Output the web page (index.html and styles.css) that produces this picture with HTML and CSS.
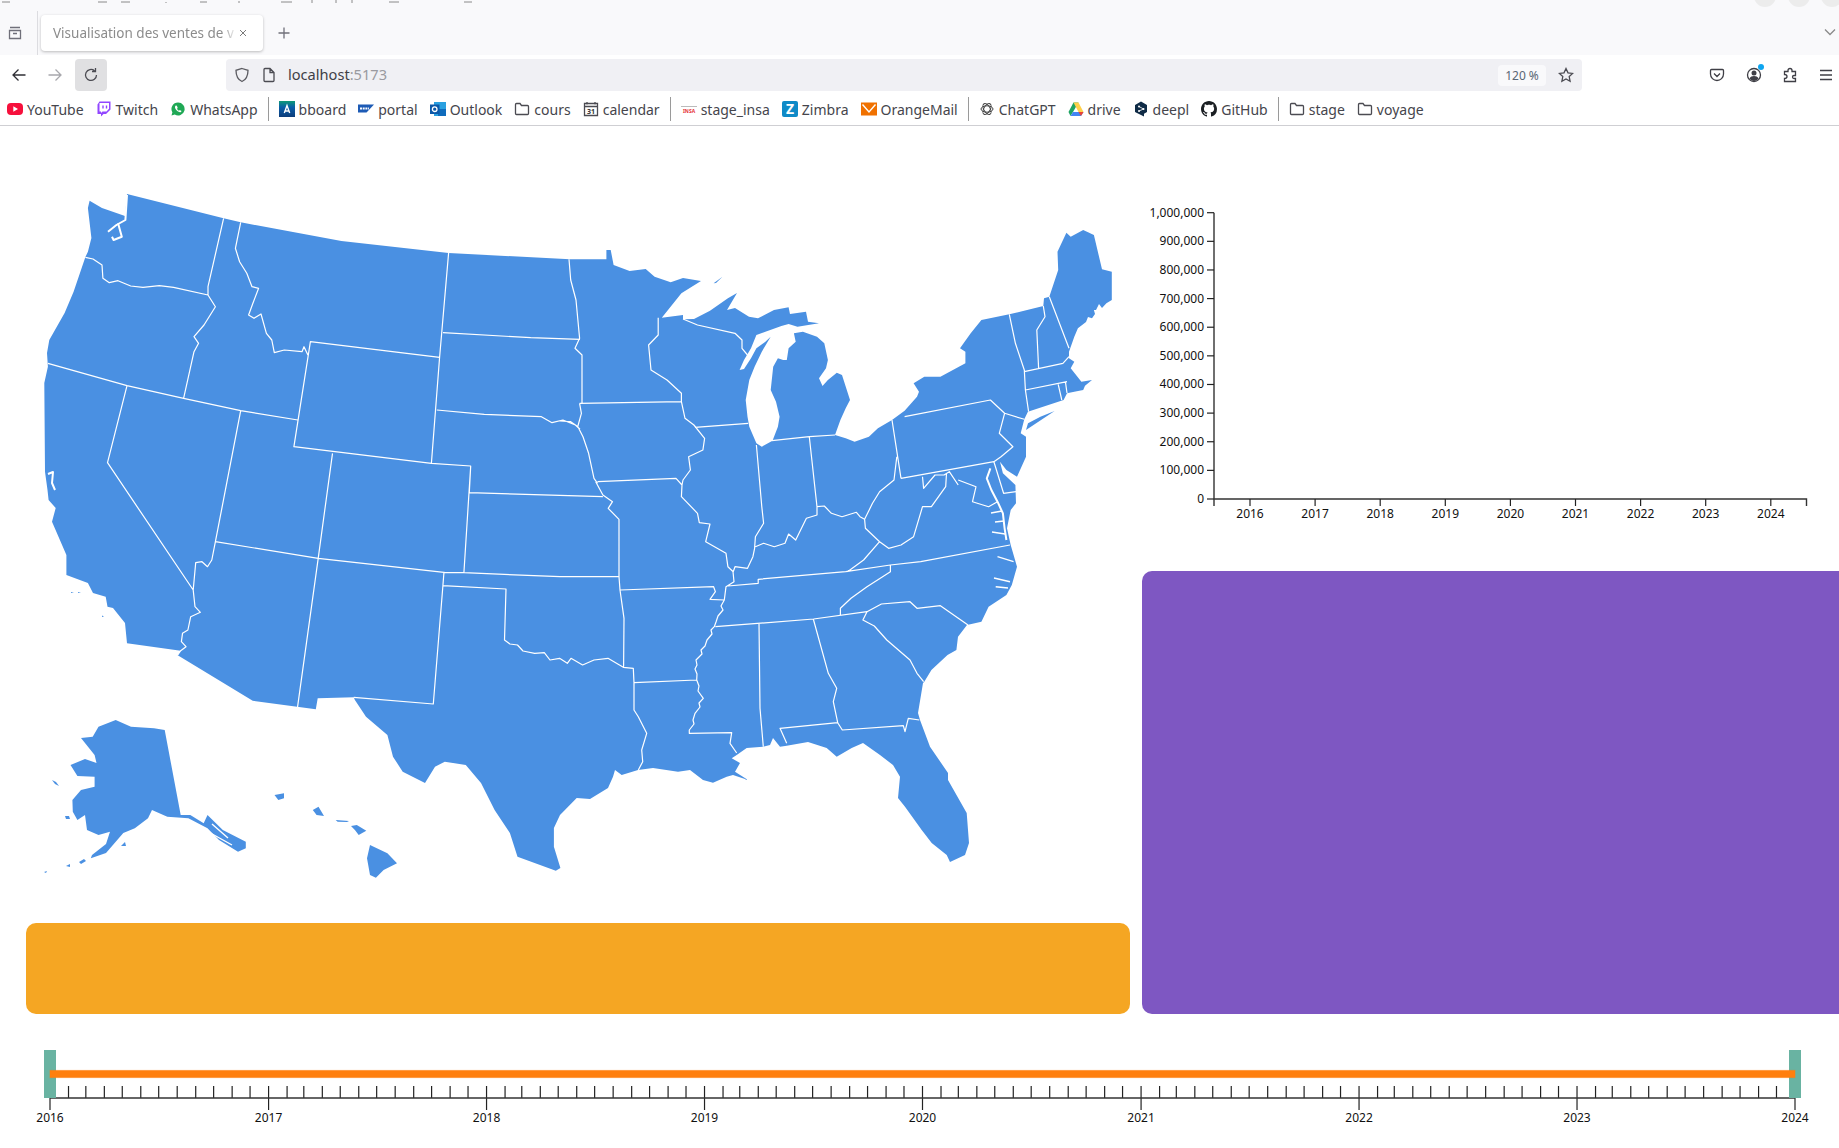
FILE: index.html
```html
<!DOCTYPE html>
<html>
<head>
  <meta charset="utf-8">
  <meta name="viewport" content="width=device-width, initial-scale=1">
  <title>Visualisation des ventes de voitures</title>
  <link rel="stylesheet" href="styles.css">
</head>
<body>

  <!-- Fenetre du navigateur -->
  <header class="browser">
    <svg class="title-strip" viewBox="0 0 1839 8">
      <path class="title-marks" d="M2 2H10M98 2H107M121 2H130M166 2V3M200 2H207M239 1V3M281 2H292M312 0V3M336 0V3M352 0V3M389 2H399M464 2H472"/>
      <circle class="win-btn" cx="1765" cy="-4" r="11"/>
      <circle class="win-btn" cx="1799" cy="-4" r="11"/>
      <circle class="win-btn" cx="1832" cy="-4" r="11"/>
    </svg>

    <div class="tabbar">
      <svg class="ico tabs-ico" viewBox="0 0 16 16"><path d="M3 2.500h10M2.500 5.500h11v8h-11zM6 8.500h4"/></svg>
      <div class="tab-sep"></div>
      <div class="tab">
        <span class="tab-title">Visualisation des ventes de v</span>
        <svg class="ico tab-close" viewBox="0 0 16 16"><path d="M4 4l8 8M12 4l-8 8"/></svg>
      </div>
      <svg class="ico tab-new" viewBox="0 0 16 16"><path d="M8 2.500v11M2.500 8h11"/></svg>
      <svg class="ico tab-list" viewBox="0 0 16 16"><path d="M3 5.500l5 5 5-5"/></svg>
    </div>

    <div class="toolbar">
      <svg class="ico nav dark" viewBox="0 0 16 16"><path d="M14.500 8H2M7.500 2.500L2 8l5.500 5.500"/></svg>
      <svg class="ico nav dim" viewBox="0 0 16 16"><path d="M1.500 8H14M8.500 2.500L14 8l-5.500 5.500"/></svg>
      <div class="reload"><svg class="ico" viewBox="0 0 16 16"><path d="M13.500 8a5.500 5.500 0 1 1-2-4.300M12.500 1v3.500H9"/></svg></div>
      <div class="urlbar">
        <svg class="ico shield" viewBox="0 0 16 16"><path d="M8 1.500l6 1.800c0 6-1.800 9.500-6 11.200C3.800 12.800 2 9.300 2 3.300z"/></svg>
        <svg class="ico page" viewBox="0 0 16 16"><path d="M3 2.500c0-.6.400-1 1-1h5l4 4v8c0 .6-.4 1-1 1H4c-.6 0-1-.4-1-1zM9 1.500v4h4"/></svg>
        <span class="url-host">localhost<span class="url-port">:5173</span></span>
        <span class="zoom-pill">120 %</span>
        <svg class="ico star" viewBox="0 0 16 16"><path d="M8 1.500l2 4.300 4.700.6-3.500 3.200.9 4.700L8 12l-4.100 2.300.9-4.700L1.300 6.400 6 5.800z"/></svg>
      </div>
      <svg class="ico tool pocket" viewBox="0 0 16 16"><path d="M2.500 2.500h11c.6 0 1 .4 1 1V7c0 3.600-3 6.500-6.500 6.500S1.500 10.600 1.500 7V3.500c0-.6.400-1 1-1zM5 6.500l3 3 3-3"/></svg>
      <span class="account">
        <svg class="ico tool" viewBox="0 0 16 16"><circle cx="8" cy="8" r="6.500"/><circle class="solid" cx="8" cy="6" r="2.500"/><path class="solid" d="M3.500 11.500c1-1.800 2.500-2.500 4.500-2.500s3.500.7 4.500 2.500c-1 1.500-2.700 2.500-4.500 2.500s-3.500-1-4.500-2.500z"/></svg>
        <span class="notif-dot"></span>
      </span>
      <svg class="ico tool" viewBox="0 0 16 16"><path d="M6 3.500C6 2.300 6.800 1.500 8 1.500s2 .8 2 2V4.500h3.500v4H12c-1 0-1.500.7-1.500 1.500s.5 1.500 1.500 1.500h1.500v3h-11v-3c1.300 0 2.500-.7 2.500-2s-1.200-2-2.500-2v-3H6z"/></svg>
      <svg class="ico tool last" viewBox="0 0 16 16"><path d="M2 3.500h12M2 8h12M2 12.500h12"/></svg>
    </div>

    <nav class="bookmarks">
      <a class="bm"><svg class="fav" viewBox="0 0 16 16"><rect y="2" width="16" height="12" rx="4" fill="#f6103c"/><path d="M6.300 5.200v5.600L11 8z" fill="#fff"/></svg>YouTube</a>
      <a class="bm"><svg class="fav" viewBox="0 0 16 16"><path d="M3.500 0.500L1.500 3.500V13H5v2.500L7.500 13H10l4.500-4.500V.5z" fill="#9146ff"/><path d="M3.500 2h9.500v5.800L10.500 10.500H6.500L5 12v-1.500H3.500z" fill="#fff"/><path d="M7 4.500v3M10.500 4.500v3" stroke="#9146ff" stroke-width="1.400"/></svg>Twitch</a>
      <a class="bm"><svg class="fav" viewBox="0 0 16 16"><path d="M8 1.500a6.500 6.500 0 0 0-5.600 9.800L1.500 14.500l3.300-.9A6.500 6.500 0 1 0 8 1.500z" fill="#1fa855"/><path d="M5.800 4.500c-.6.500-1 1.200-.7 2.400.5 1.700 2.500 3.800 4.300 4.200 1.100.2 1.900-.3 2.100-1.200l-1.700-1-.8.800c-.9-.4-1.600-1.100-2-2l.7-.8-.8-2.200z" fill="#fff"/></svg>WhatsApp</a>
      <span class="bm-sep"></span>
      <a class="bm"><svg class="fav" viewBox="0 0 16 16"><defs><linearGradient id="bb" x1="0" y1="0" x2="0" y2="1"><stop offset="0" stop-color="#0e9a78"/><stop offset=".4" stop-color="#0a5da8"/><stop offset="1" stop-color="#0d3d7a"/></linearGradient></defs><rect width="16" height="16" fill="url(#bb)"/><path d="M5.300 12L8 4.500l2.700 7.500M6.500 10h3" stroke="#fff" stroke-width="1.400" fill="none"/></svg>bboard</a>
      <a class="bm"><svg class="fav" viewBox="0 0 16 16"><path d="M0 3.500h16L8.500 11.500H0z" fill="#1d5bb5"/><path d="M2 7.500h9" stroke="#fff" stroke-width="2" stroke-dasharray="2 .7"/></svg>portal</a>
      <a class="bm"><svg class="fav" viewBox="0 0 16 16"><rect x="4" y="1" width="12" height="14" fill="#2aa0e0"/><rect x="8" y="8" width="8" height="7" fill="#0f6cbd"/><rect y="3.500" width="9.500" height="9.500" fill="#0c58a8"/><circle cx="4.700" cy="8.200" r="2.300" fill="none" stroke="#fff" stroke-width="1.300"/></svg>Outlook</a>
      <a class="bm"><svg class="ico fav" viewBox="0 0 16 16"><path d="M1.500 3.500c0-.6.400-1 1-1h3.500l1.500 2h6c.6 0 1 .4 1 1v7c0 .6-.4 1-1 1h-11c-.6 0-1-.4-1-1z"/></svg>cours</a>
      <a class="bm"><svg class="ico fav cal" viewBox="0 0 16 16"><path d="M1.500 2.500h13v12h-13zM1.500 5.500h13M4 1v2.500M12 1v2.500"/><text class="cal-num" x="8" y="13">31</text></svg>calendar</a>
      <span class="bm-sep"></span>
      <a class="bm"><svg class="fav" viewBox="0 0 16 16"><rect y="5" width="16" height="1" fill="#bbb"/><text class="insa" x="8" y="11.500">INSA</text></svg>stage_insa</a>
      <a class="bm"><svg class="fav" viewBox="0 0 16 16"><rect width="16" height="16" rx="2" fill="#0f8ac7"/><text class="zimbra-z" x="8" y="13">Z</text></svg>Zimbra</a>
      <a class="bm"><svg class="fav" viewBox="0 0 16 16"><rect y="1.500" width="16" height="13" fill="#f07100"/><path d="M1.500 3.500L8 11l6.500-7.500" stroke="#fff" stroke-width="1.400" fill="none"/></svg>OrangeMail</a>
      <span class="bm-sep"></span>
      <a class="bm"><svg class="fav gpt" viewBox="0 0 16 16"><g fill="none" stroke="#444" stroke-width="1"><ellipse cx="8" cy="8" rx="6" ry="3.200"/><ellipse cx="8" cy="8" rx="6" ry="3.200" transform="rotate(60 8 8)"/><ellipse cx="8" cy="8" rx="6" ry="3.200" transform="rotate(120 8 8)"/></g></svg>ChatGPT</a>
      <a class="bm"><svg class="fav" viewBox="0 0 16 16"><path d="M5.500 1.500h5L5 11 2.500 15 .5 11z" fill="#1fa463"/><path d="M10.500 1.500L15.500 11h-5L5.500 1.500z" fill="#ffd04b"/><path d="M5 11h10.500l-2.500 4H2.500z" fill="#4285f4"/><path d="M10.500 11H15.500L13 15z" fill="#ea4335"/></svg>drive</a>
      <a class="bm"><svg class="fav" viewBox="0 0 16 16"><path d="M8 .5l6 3.400v7L11 12.700V15.500l-3-1.500-6-3.100v-7z" fill="#0f2b46"/><circle cx="6" cy="5.500" r="1" fill="#fff"/><circle cx="6" cy="10" r="1" fill="#fff"/><circle cx="10.500" cy="8" r="1" fill="#fff"/><path d="M6 5.500L10.500 8 6 10" stroke="#fff" stroke-width=".8" fill="none"/></svg>deepl</a>
      <a class="bm"><svg class="fav" viewBox="0 0 16 16"><path fill="#1b1f23" d="M8 0C3.580 0 0 3.580 0 8c0 3.540 2.290 6.530 5.470 7.590.4.070.55-.17.55-.38 0-.19-.01-.82-.01-1.490-2.010.37-2.530-.49-2.690-.94-.09-.23-.48-.94-.82-1.130-.28-.15-.68-.52-.01-.53.630-.01 1.080.58 1.230.82.720 1.210 1.870.87 2.330.66.070-.52.280-.87.510-1.070-1.780-.2-3.640-.89-3.640-3.950 0-.87.310-1.590.820-2.150-.08-.2-.36-1.020.080-2.120 0 0 .670-.21 2.200.82.640-.18 1.320-.27 2-.27.680 0 1.360.09 2 .27 1.530-1.040 2.200-.82 2.200-.82.440 1.100.160 1.920.080 2.120.510.560.820 1.270.820 2.150 0 3.070-1.870 3.750-3.650 3.950.290.250.540.730.540 1.480 0 1.070-.01 1.930-.01 2.200 0 .210.150.460.550.380A8.013 8.013 0 0 0 16 8c0-4.420-3.580-8-8-8z"/></svg>GitHub</a>
      <span class="bm-sep"></span>
      <a class="bm"><svg class="ico fav" viewBox="0 0 16 16"><path d="M1.500 3.500c0-.6.400-1 1-1h3.500l1.500 2h6c.6 0 1 .4 1 1v7c0 .6-.4 1-1 1h-11c-.6 0-1-.4-1-1z"/></svg>stage</a>
      <a class="bm"><svg class="ico fav" viewBox="0 0 16 16"><path d="M1.500 3.500c0-.6.400-1 1-1h3.500l1.500 2h6c.6 0 1 .4 1 1v7c0 .6-.4 1-1 1h-11c-.6 0-1-.4-1-1z"/></svg>voyage</a>
    </nav>
  </header>

  <!-- Contenu de la page -->
  <main class="dashboard">
    <section class="col">
      <svg class="us-map" viewBox="26 126 1104 797">
        <!-- Etats-Unis continentaux -->
        <path class="land" d="M127 194L223.600 218.300 240.700 222.300 341.400 241 448.600 253 570 259.300 606.400 259.300 606.400 250 610.700 250 613.600 265 629.600 271 645.700 269 654.600 276.700 670.700 282.300 683 278 701 281 681.400 293.300 661.800 317.700 683 315 683 319.300 694 319 710 310.700 727.900 298.300 737 293 727 310 735 308 749 316.700 758 318.300 774 310 788.600 307.300 790 314 806 311.700 808 321.700 819 323.300 797.500 326.700 788.600 324 781.400 326 765.400 331.700 756.400 335 751 348.300 744 360 739.600 370 744 369 751 358.300 756.400 348.300 765.400 341.700 770.700 336.700 761.800 351.700 754.600 366.700 749.300 380 745.700 400 747.500 416.700 749.300 426.700 756.400 443.300 761.800 446.700 772.500 440.700 777.900 426.700 779.600 416.700 776 401.700 770.700 390 773.200 366.700 777.900 358.300 783.200 360 786.800 360 788.600 348.300 795.700 341.700 793.900 333.300 802.900 331.700 817 336.700 824.300 343.300 827.900 360 826 368.300 819 378.300 822.500 386 827.900 380 836.800 372.700 842 375 850 400 845.700 408.300 840.400 420 835 435 845.700 438.300 854.600 441.700 868.900 436.700 877.900 428.300 892 420 904.600 410.700 917 396.700 919 391.700 913.600 383.300 924.300 376.700 940.400 376.700 965.400 363.300 965.400 351.700 960 348.300 970.700 333.300 981.400 320 1009.300 314.300 1043.300 306 1044 298.300 1049.300 296.700 1058.200 270 1057.500 251.700 1066.400 232.700 1070.700 236.700 1083.200 230 1093.900 235 1102 269.300 1111.800 271.700 1111.800 300 1106.400 303.300 1102 308 1099 304 1096 310 1093.900 310 1095 314 1092 318.300 1088 317 1086 322 1077.900 328.300 1074.300 336.700 1069 351.700 1069 358.300 1074.300 361.700 1070.700 368.300 1081.400 381.700 1092 380 1085 385.700 1083.200 390 1074.300 391.700 1067 393.300 1063.600 400 1027.900 411.700 1024.300 419.300 1020.700 433.300 1026 436.700 1026 456.700 1017 476.700 1006.400 470 1000 461.700 1002.900 473.300 1015.400 485 1016 503.300 1010.700 510 1007 528.300 1010.700 545 1017 566.700 1011.800 585 1006.400 595 988.600 606.700 981.400 621.700 967 625 958 636.700 956.400 650 947.500 655 931.400 670 924.300 681.700 923 683 918 713 920 720 930 746.700 948 773 948 780 966.700 813 969 843 965 855 950 862 946.700 855 931.700 843 921.700 830 905 806.700 898 798 900 776.700 893 765 880 755 863 743 851.700 748 836.700 756.700 826.700 748 808 742 786.700 745.700 780 746.700 773 738 770 745 763 746.700 746.700 748 736.700 755 731.700 758.300 740 763 735 771.700 748 780 733 775 726.700 776.700 713 782.700 703 780 690 770 678 771.700 653 768 638 770 621.700 775 615 770 613 776.700 608 788 590 799 576.700 798 560 815 553.900 828 553.900 846.700 560.400 868 555.800 870.700 517.500 856.700 509.900 833 494.600 810 481 783 465.800 765 444.800 761.700 435 766.700 425 783 402.700 771.700 393 756.700 387.400 735 366 716.700 354.900 700 353.700 697.300 317.700 698.300 315.800 709.300 252.700 700.700 177.700 655.300 180.700 650.700 127 643.300 125 623 113 608 107.500 606.700 105.700 596.700 93 593 87.900 583 66.400 575 66.400 555 52 521.700 55.700 508 48.600 500 47.500 490 45 471.700 44.300 383 47.900 366.700 47 353 49.300 340 64.600 313 73.600 291.700 85.400 257 87.900 251.700 91.400 238 87.900 208 89.600 200.700 102 208 116.400 213 125 216z"/>
        <!-- Iles et Alaska -->
        <path class="land" d="M1026 430L1054.600 411 1040.400 416.700 1028 423.300zM713.600 283.300L722.500 276.700 716 283zM71 592l3 .5-3 .5zM78 592l3 .5-3 .5zM102 615.500l2 1-2 .5z"/>
        <path class="land" d="M164.700 730L180.700 815 190.300 815 203.700 823.300 207.500 815 222.800 830 245.800 841.700 245.800 848.300 238 851.700 219 840 207.500 828.300 188.400 818.300 167.300 816.700 152 810 148 818.300 134.800 828.300 123.300 833 106 853 90.800 858.300 92 855 106 844 110 831.700 98.500 835 87 830 85 815 77.400 820 72.800 811.700 72.400 800 81 790 94.600 786.700 94.600 776.700 77.400 776 70.500 765 85 759 96.500 763 94.600 755 81 738 92.700 736.700 98.500 726.700 115.700 720 131 726.700 154 728.300zM66 866l4-2 0 3zM79 862l5-3 2 2-5 3zM121 846l4-4 1 4zM65 816l4 0 1 3-4 0zM52 780l4 2 3 4-4-2zM44 872l3-1-1 2z"/>
        <!-- Hawaii -->
        <path class="land" d="M274.500 795L284 793.300 284 798.300 278.300 800zM312.800 810L318.500 806.700 324 816 316.600 815zM335.700 820L349 821 347 822 337.600 821.700zM351 826L356.800 825 366.300 830.700 358.700 835 354.900 830zM370 845L387.400 853.300 397 863.300 383.600 870 375.900 877.700 370 875 367 858.300z"/>
        <!-- Baies -->
        <path class="inlet" d="M990.400 468.300L986.800 478.300 991.400 490 997.500 501.700 1002.900 513.300 1004.600 528.300 1006.400 540M127 195L125.400 220 116.400 225 108 231.700M118 223L121.800 236.700 113.600 240 112 236.700M48 474L53 472 52 483 55 490"/>
        <path class="creek" d="M1002 511L991 513M1004 521L995 522M1005 534L992 532M997.500 556.700L1013.600 561.700M994 578L1010 581.700M995.700 586.700L1008 588M205 830L232 845M212 824L228 838"/>
        <!-- Frontieres des etats -->
        <path class="borders" d="M85.400 257.300L93 259 102 265 102.900 278.300 109.300 282.700 118 280.700 130.700 286 143 287.300 159.300 285.700 173.600 287.300 208 295M223.600 218.300L208 286.700 208 295 215.400 306.700 204 325 194 336.700 198.600 343.300 194 351.700 183.600 398.300M47.900 363.300L127 385.700 183.600 398.300 240.700 410.700 297.900 420M127 385.700L107.500 462.700 193.200 590 195 606.700 200.400 612.300 190.700 616.700 187.900 630 182.500 633.300 181.400 641.700 186 646.700 180.700 650.700 177.700 655M240.700 410.700L215.400 541.700 211.800 560 207.500 566.700 202 561.700 195.700 562.700 193.200 590M240.700 222.300L235.400 248.300 239.600 261.700 246.800 273.300 252 286.700 258.600 288.300 252.900 303.300 248.600 315 254 318.300 261 314 266.400 333.300 271.800 340 274.300 352.700 284.300 350 302 351.700 304 346.700 307.900 355M310.400 341.700L439.600 357.300 431.400 463.300 293.900 446.700zM448.600 253L439.600 357.300M443 332.700L530.700 337.700 580 339.300M436.800 410L484.300 414.300 541.400 416.700 552 422.700 562.900 420 575.400 425 580 429.300M431.400 463.300L470.700 466 469.300 492.700M470.700 466L463.900 572.700M469.300 492.700L602.900 496.700M332.500 453.300L318.200 558.300 297.500 707.300M215.400 541.700L318.200 558.300 443.900 572.300 463.900 572.700 560 576.700 619 576.700M444 571.700L442.900 585.700 433.300 704 353.700 697.300M442.900 585.700L506 589 504.500 640 509.900 644 517.500 645 523 651 534.700 653.300 544.300 652.700 550 660 559.600 658.300 567.300 663.300 571 658.300 582.600 665 594 660 608 658.300 623.300 667.300 633.300 668.300 634 682.700 634 710 638.300 716.700 646.700 733.300 641.700 750 642.700 761.700 638.300 770M634 682.700L696.700 680M595.700 481.700L602.900 495 612.500 501.700 608.200 508.300 619 519.300 619 576.700 620 590 624 618.300 623.600 666.700M560 421L570.700 421.700 577.900 426.700 583 436.700 588.600 453.300 594 478.300 597.500 483.300M579.600 403.300L581.400 413.300 577.900 426M582 403.300L582 355 575 348.300 579.600 338.300 576 300 570.700 280 569 259.300M579.600 403.300L681.400 401.700M658.200 317.700L658.200 335 648.600 345 651 370 667 380 681.400 393.300 681.400 401.700 685 418.300 693.900 425 704.600 438.300 702.900 450 688.600 456.700 690.400 470 683 480 682 485M597.500 481.700L676 478.300 682 485 681.400 496.700 697.500 513.300 699.300 522.700 710 524 705.700 541.700 726 553.300 727.900 566.700 733.200 571.700M695 427.300L748.200 423.300M683 319L697.500 325 735 333.300 742 340 742 348.300 747.500 355M756.400 445L761.800 506.700 763.600 523.300 755.400 536.700 754.600 548.300 752.900 556.700 747.500 568.300 735 566.700 733.200 571.700M771.800 440.700L809.300 436.700 835 435M809.300 436.700L817 506.700M755.400 546.700L763.600 543.300 774.300 546.700 785 543.300 788.600 534 795.700 540 806.400 518.300 817 515 817 506.700 824.300 506 831.400 513.300 842 516.700 856.400 512.300 860 516.700 864.600 519.300 872.500 503.300 879.600 491.700 894 480 896.800 456.700M892 420L901 478.300M864.600 519.300L865.400 528.300 879.600 541.700 888.600 548.300 901 545 913.600 536.700 922.500 506.700 931.400 506.700 945.700 486.700 946.500 473.300M922.500 476.700L923.600 488.300 935 475 944 475 949.300 471.700 958.200 485M958.200 480L976 486.700 972.500 501.700 988.600 506.700 997 502M901 478.300L993.900 461.700 1003.600 493.300 1016 491.700M904.600 416.700L990.400 400 1004.600 413.300 999.300 433.300 1012.900 446.700 1001 456.700 993.900 461.700M1004.600 413.300L1024.300 419.300M1009.300 314.300L1015.400 343.300 1024.300 370 1025.400 390 1028.600 411.700M1043.300 306L1045 316.700 1036.800 330 1038.600 368.300M1049.300 296.700L1069 348.300M1024.300 371.700L1062.900 363.300 1069 356.700M1025.400 390L1067 381.700M1058.200 384.300L1061.800 400M1065.400 381.700L1067 393M727.900 586L758.200 583.300 758.200 579.300 845.700 571.700 890.400 565 920.700 561.700 1010 545M879.600 541.700L863.600 560 847.500 571.700M890.400 565L890.400 571.700 867 586.700 851 598.300 840.400 608.300 840.400 615M715.400 626.700L813.600 619 867 611.700 881.400 604 910 601.700 917 608.300 940.400 605.700 968 625M867 611.700L862.900 620 874.300 626 886.800 640 910 660 917 673.300 923.600 681.700M733 571.700L734 581.700 726 586.700 724.300 600 721 606 723 610 718 616 716 622 714.300 626.700 711 630 712 634 707 640 705 646 701 650 702 654 696 660 697 665 695 669 697 674 696.700 680 699 686 698 691 703.300 698.300 699 703 700 707 695 713.300 693 720 694 724 689.300 730 689.300 733.300 731.700 732.700 730 743.300 736.700 753M620 590L713.600 586.700 715.400 591.700 710 599.300 724.300 600M759 623.300L760 708.300 763.300 746.700M813.300 619L828.300 673.300 836.700 688.300 833.300 701.700 837.700 722.700 780 728.300 786.700 743.300M837.700 722.700L842.300 730 903.300 725.700 905 731.700 908.300 718.300 919.300 720"/>
      </svg>
      <div class="panel panel-orange"></div>
    </section>

    <section class="col">
      <svg id="salesChart" class="sales-chart" viewBox="1142 126 697 445"></svg>
      <div class="panel panel-purple"></div>
    </section>
  </main>

  <!-- Frise des annees -->
  <svg id="timeline" class="timeline" viewBox="0 1014 1839 134"></svg>

  <script src="charts.js"></script>
</body>
</html>
```

FILE: styles.css
```css
* {
  box-sizing: border-box;
}
html, body {
  margin: 0;
  padding: 0;
  background: #fff;
  overflow: hidden;
}
body {
  width: 1839px;
  height: 1148px;
  font-family: "Noto Sans", sans-serif;
}

/* barre du navigateur */
.browser {
  position: relative;
  height: 126px;
  border-bottom: 1px solid #cfcfd3;
  color: #3f3f46;
}
.title-strip {
  position: absolute;
  top: 0;
  left: 0;
  width: 1839px;
  height: 8px;
}
.title-marks {
  stroke: #8a8a8a;
  stroke-width: 1;
  fill: none;
}
.win-btn {
  fill: #ececec;
}
.ico {
  width: 16px;
  height: 16px;
  fill: none;
  stroke: #4b4b52;
  stroke-width: 1.3;
  flex: none;
}
.tabbar {
  height: 55px;
  background: #f9f9fb;
  display: flex;
  align-items: center;
  padding-left: 7px;
}
.tabs-ico {
  stroke: #70707a;
  margin-top: 11px;
}
.tab-sep {
  width: 1px;
  height: 44px;
  background: #dcdce0;
  margin: 11px 0 0 14px;
}
.tab {
  width: 222px;
  height: 36px;
  margin: 11px 0 0 3px;
  padding-left: 12px;
  background: #fff;
  border-radius: 4px;
  box-shadow: 0 1px 3px rgba(0, 0, 0, 0.25);
  display: flex;
  align-items: center;
}
.tab-title {
  width: 184px;
  white-space: nowrap;
  font-size: 13.500px;
  color: #8c8c8c;
  -webkit-mask-image: linear-gradient(to right, #000 92%, transparent);
  mask-image: linear-gradient(to right, #000 92%, transparent);
}
.tab-close {
  width: 12px;
  height: 12px;
  stroke: #777;
}
.tab-new {
  stroke: #70707a;
  margin: 11px 0 0 13px;
}
.tab-list {
  stroke: #8a8a8a;
  margin: 9px 1px 0 auto;
}
.toolbar {
  height: 38px;
  display: flex;
  align-items: center;
  padding: 2px 0 0 11px;
}
.nav {
  margin-right: 20px;
}
.nav.dark {
  stroke: #2f2f36;
}
.nav.dim {
  stroke: #a8a8ad;
  margin-right: 12px;
}
.reload {
  width: 32px;
  height: 32px;
  background: #e0e0e2;
  border-radius: 4px;
  display: flex;
  align-items: center;
  justify-content: center;
}
.urlbar {
  width: 1356px;
  height: 32px;
  margin-left: 119px;
  background: #f0f0f4;
  border-radius: 4px;
  display: flex;
  align-items: center;
  padding-left: 8px;
}
.shield {
  margin-right: 11px;
  stroke: #5b5b61;
}
.page {
  margin-right: 11px;
}
.url-host {
  font-size: 14.600px;
  color: #3f3f46;
  padding-bottom: 2px;
}
.url-port {
  color: #9a9aa0;
}
.zoom-pill {
  margin-left: auto;
  width: 48px;
  height: 21px;
  background: #f9f9fb;
  border-radius: 4px;
  font-size: 12px;
  line-height: 21px;
  text-align: center;
  color: #5a6675;
}
.star {
  margin: 0 8px 0 12px;
}
.tool {
  stroke: #3f3f46;
}
.pocket {
  margin-left: 127px;
}
.account {
  position: relative;
  margin-left: 21px;
  display: flex;
}
.account + .tool {
  margin-left: 20px;
}
.last {
  margin-left: 20px;
}
.solid {
  fill: #3f3f46;
  stroke: none;
}
.notif-dot {
  position: absolute;
  top: -3px;
  right: -2px;
  width: 6px;
  height: 6px;
  border-radius: 50%;
  background: #0ea5f0;
}

/* marque-pages */
.bookmarks {
  height: 32px;
  display: flex;
  align-items: center;
  padding-left: 7px;
  gap: 12px;
  font-size: 14px;
  white-space: nowrap;
}
.bm {
  display: flex;
  align-items: center;
  gap: 4px;
  color: #45454c;
}
.fav {
  width: 16px;
  height: 16px;
  flex: none;
}
.bm-sep {
  width: 1px;
  height: 24px;
  background: #9a9a9a;
  margin: 0 -2px;
}
.cal-num {
  font-size: 7px;
  font-weight: bold;
  text-anchor: middle;
  fill: #333;
  stroke: none;
}
.zimbra-z {
  font-size: 14px;
  font-weight: bold;
  text-anchor: middle;
  fill: #fff;
}
.insa {
  font-size: 5px;
  font-weight: bold;
  text-anchor: middle;
  fill: #e53238;
}

/* page */
.dashboard {
  display: grid;
  grid-template-columns: 1104px 1fr;
  column-gap: 12px;
  padding-left: 26px;
}
.us-map {
  display: block;
  width: 1104px;
  height: 797px;
}
.land {
  fill: #4a90e2;
}
.inlet {
  fill: none;
  stroke: #fff;
  stroke-width: 2;
  stroke-linejoin: round;
}
.creek {
  fill: none;
  stroke: #fff;
  stroke-width: 1.400;
}
.borders {
  fill: none;
  stroke: #fff;
  stroke-width: 1.200;
  stroke-linejoin: round;
}
.sales-chart {
  display: block;
  width: 697px;
  height: 445px;
}
.panel {
  border-radius: 10px;
}
.panel-orange {
  height: 91px;
  background: #f5a623;
}
.panel-purple {
  height: 443px;
  background: #7e57c2;
  border-radius: 10px 0 0 10px;
}

/* axes */
.timeline {
  display: block;
  width: 1839px;
  height: 134px;
}
.axis-line {
  fill: none;
  stroke: #333;
  stroke-width: 1.400;
}
.tick {
  stroke: #222;
  stroke-width: 1.200;
}
.axis-text {
  font-family: "Noto Sans", sans-serif;
  font-size: 12px;
  fill: #111;
}
.handle {
  fill: #69b3a2;
}
.range {
  fill: #ff7f0e;
  stroke: rgba(255, 127, 14, 0.5);
  stroke-width: 1;
}
```

FILE: charts.js
```js
const NS = 'http://www.w3.org/2000/svg';

function add(parent, tag, attrs, text) {
  const el = document.createElementNS(NS, tag);
  for (const k in attrs) el.setAttribute(k, attrs[k]);
  if (text !== undefined) el.textContent = text;
  parent.appendChild(el);
  return el;
}

function tick(svg, x1, y1, x2, y2) {
  add(svg, 'line', { class: 'tick', x1, y1, x2, y2 });
}

// Axes du graphique des ventes (vide pour l'instant)
function drawSalesChart() {
  const svg = document.getElementById('salesChart');
  const left = 1214, right = 1806.500, top = 212.700, bottom = 499;

  add(svg, 'path', { class: 'axis-line', d: `M${left} ${top}V${bottom}H${right}V${bottom + 7}M${left} ${bottom}v7` });

  for (let i = 0; i <= 10; i++) {
    const y = bottom - i * (bottom - top) / 10;
    tick(svg, left - 7, y, left, y);
    add(svg, 'text', { class: 'axis-text', x: left - 10, y: y + 4, 'text-anchor': 'end' }, (i * 100000).toLocaleString('en-US'));
  }

  for (let i = 0; i < 9; i++) {
    const x = 1250 + i * 65.100;
    tick(svg, x, bottom, x, bottom + 7);
    add(svg, 'text', { class: 'axis-text', x, y: bottom + 19, 'text-anchor': 'middle' }, 2016 + i);
  }
}

// Frise : un trait par mois, une graduation par annee
function drawTimeline() {
  const svg = document.getElementById('timeline');
  const x0 = 50, x1 = 1795, axisY = 1098;
  const t0 = Date.UTC(2016, 0, 1), t1 = Date.UTC(2024, 0, 1);
  const xOf = t => x0 + (t - t0) / (t1 - t0) * (x1 - x0);

  for (let m = 0; m <= 96; m++) {
    const x = xOf(Date.UTC(2016, m, 1));
    tick(svg, x, axisY - 12, x, axisY);
    if (m % 12 === 0) {
      tick(svg, x, axisY, x, axisY + 12);
      add(svg, 'text', { class: 'axis-text', x, y: axisY + 24, 'text-anchor': 'middle' }, 2016 + m / 12);
    }
  }

  add(svg, 'path', { class: 'axis-line', d: `M${x0} ${axisY}H${x1}` });
  add(svg, 'rect', { class: 'handle', x: 44, y: 1050, width: 12, height: 48 });
  add(svg, 'rect', { class: 'handle', x: 1789, y: 1050, width: 12, height: 48 });
  add(svg, 'rect', { class: 'range', x: x0, y: 1070.400, width: x1 - x0, height: 7.200 });
}

drawSalesChart();
drawTimeline();
```
